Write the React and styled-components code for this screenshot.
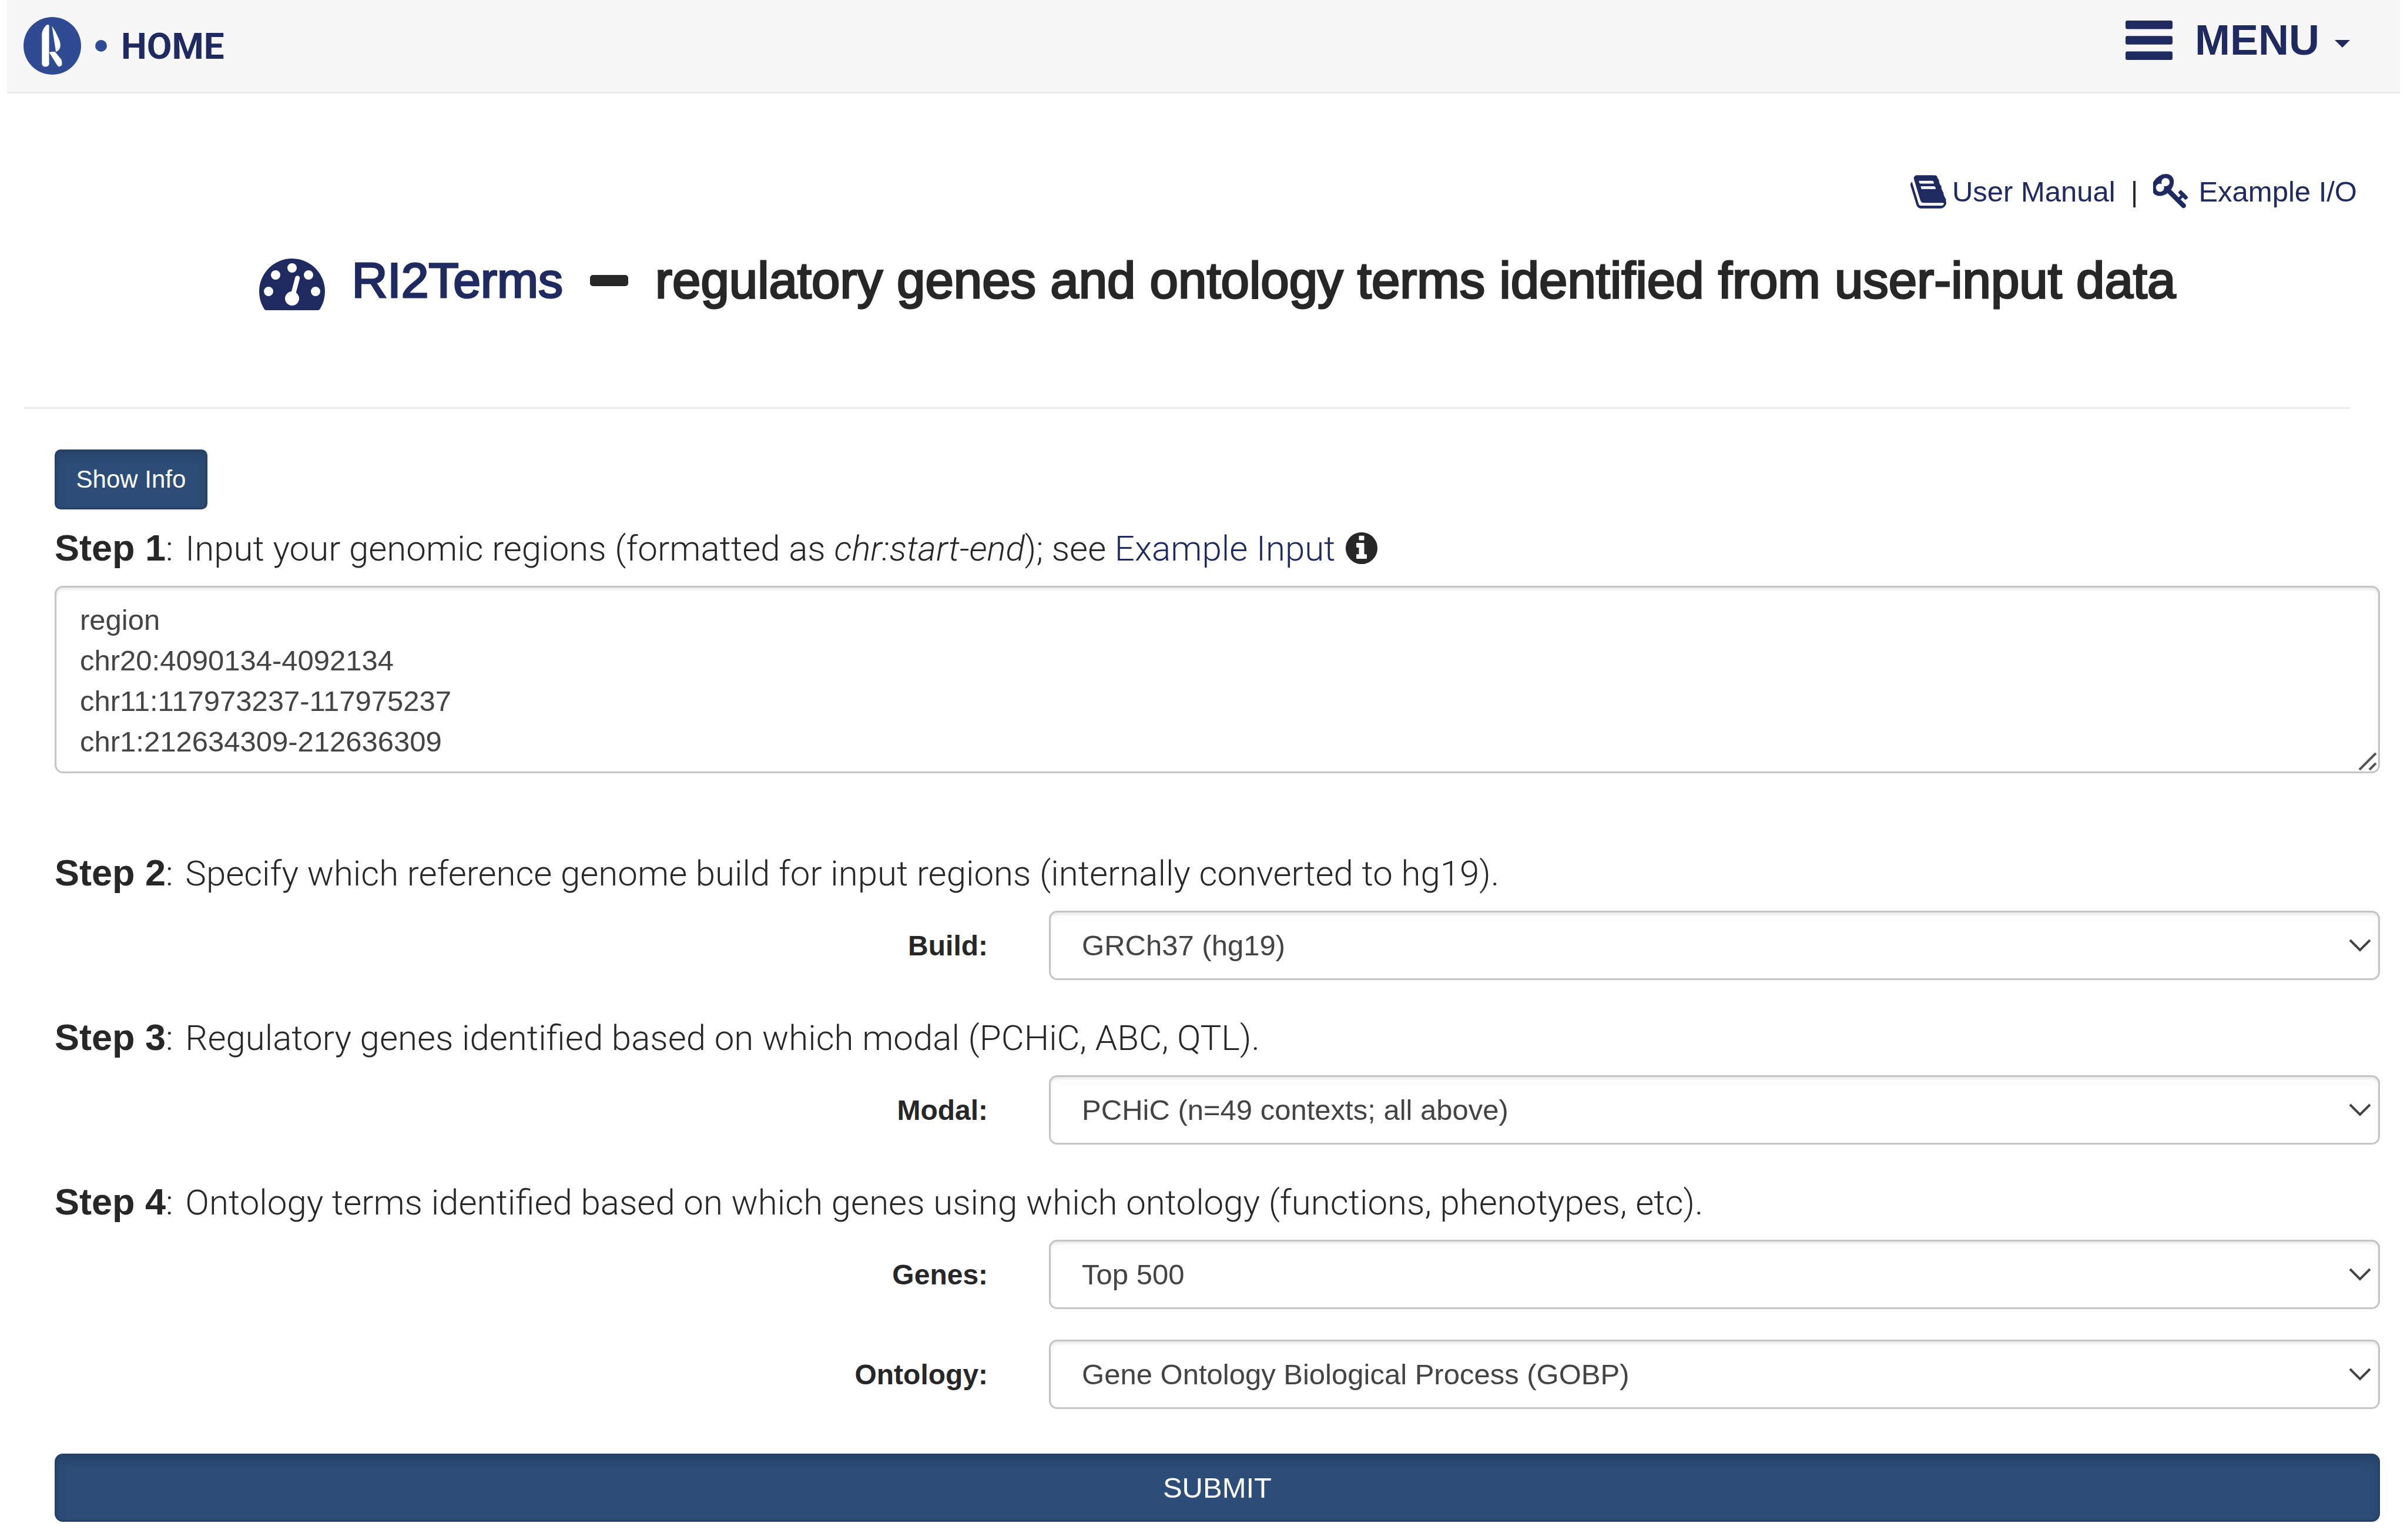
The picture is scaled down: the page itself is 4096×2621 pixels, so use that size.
import React from 'react';
import styled, { createGlobalStyle } from 'styled-components';

const navy = '#1e2a60';
const ink = '#272727';
const sans = '"Liberation Sans", Arial, sans-serif';
const light = 'Roboto, "Liberation Sans", sans-serif';

const GlobalStyle = createGlobalStyle`
  *, *::before, *::after { box-sizing: border-box; }
  body {
    margin: 0;
    background: #fefefe;
    color: ${ink};
    font-family: ${sans};
    font-size: 49px;
    line-height: 69px;
  }
  svg { display: block; flex: none; }
`;

const TopBar = styled.header`
  display: flex;
  align-items: center;
  justify-content: space-between;
  height: 159px;
  margin: 0 12px;
  padding: 0 85px 0 28px;
  background: #f7f7f7;
  border-bottom: 3px solid #ebebeb;
`;

const Brand = styled.a`
  display: flex;
  align-items: center;
  color: ${navy};
  font-family: Roboto, ${sans};
  font-size: 62px;
  font-weight: 700;
  text-decoration: none;
`;

const Dot = styled.span`
  width: 20px;
  height: 20px;
  margin: 0 24px;
  border-radius: 50%;
  background: #2f4b93;
`;

const MenuButton = styled.button`
  display: flex;
  align-items: center;
  gap: 38px;
  padding: 0 0 20px;
  border: 0;
  background: none;
  color: ${navy};
  font: 700 72px/72px ${sans};
`;

const MenuLabel = styled.span`
  display: flex;
  align-items: center;
  gap: 26px;
`;

const Caret = styled.span`
  margin-top: 12px;
  border: 13px solid transparent;
  border-top-color: ${navy};
  border-bottom: 0;
`;

const Banner = styled.section`
  padding: 133px 46px 165px 93px;
`;

const Links = styled.nav`
  display: flex;
  justify-content: flex-end;
  gap: 26px;
  padding-right: 39px;
`;

const IconLink = styled.a`
  display: flex;
  align-items: center;
  gap: ${(p) => p.$gap}px;
  color: ${navy};
  text-decoration: none;
`;

const Title = styled.h1`
  display: flex;
  align-items: center;
  justify-content: center;
  gap: 46px;
  margin: 65px 0 0;
  font-size: 87px;
  font-weight: 400;
  line-height: 92px;
  -webkit-text-stroke: 3px currentColor;
  svg {
    margin-top: 14px;
    -webkit-text-stroke: 0;
  }
`;

const TitleLink = styled.a`
  display: flex;
  align-items: center;
  gap: 46px;
  color: ${navy};
  font-size: 84px;
  text-decoration: none;
`;

const Dash = styled.span`
  width: 65px;
  height: 19px;
  border-radius: 5px;
  background: ${ink};
`;

const Rule = styled.hr`
  height: 3px;
  margin: 0 97px 69px 41px;
  border: 0;
  background: #ebebeb;
`;

const Form = styled.form`
  padding: 0 46px 26px 93px;
`;

const Button = styled.button`
  display: block;
  padding: 0;
  color: #fff;
  background: #2c4d78;
  border: 3px solid #244068;
  box-shadow: inset 0 10px 17px rgba(0, 0, 0, 0.125);
  font-family: ${sans};
`;

const InfoButton = styled(Button)`
  width: 260px;
  height: 102px;
  margin-bottom: 20px;
  border-radius: 10px;
  font-size: 42px;
`;

const SubmitButton = styled(Button)`
  width: 100%;
  height: 116px;
  margin-top: 76px;
  border-radius: 14px;
  font-size: 49px;
`;

const Step = styled.p`
  display: flex;
  align-items: baseline;
  margin: 0 0 18px;
  font-family: ${light};
  font-size: 60px;
  font-weight: 300;
  line-height: 90px;
  white-space: pre;
  a { color: ${navy}; text-decoration: none; }
  svg {
    align-self: center;
    margin-left: 18px;
  }
`;

const StepName = styled.span`
  margin-right: 6px;
  b {
    font-family: ${sans};
    font-size: 63px;
    font-weight: 700;
  }
`;

const AreaBox = styled.div`
  position: relative;
  margin-bottom: 124px;
`;

const Area = styled.textarea`
  display: block;
  width: 100%;
  height: 319px;
  padding: 21px 40px;
  overflow: hidden;
  resize: none;
  color: #444;
  background: #fefefe;
  border: 3px solid #c4c4c4;
  border-radius: 14px;
  box-shadow: inset 0 4px 4px rgba(0, 0, 0, 0.075);
  font: 49px/69px ${sans};
`;

const Grip = styled.svg`
  position: absolute;
  right: 5px;
  bottom: 4px;
`;

const Field = styled.div`
  display: grid;
  grid-template-columns: 5fr 7fr;
  align-items: center;
  margin: 0 -52px 52px;
`;

const FieldLabel = styled.label`
  padding: 0 52px;
  font-size: 48px;
  font-weight: 700;
  text-align: right;
`;

const SelectBox = styled.div`
  position: relative;
  margin: 0 52px;
`;

const Select = styled.select`
  display: block;
  width: 100%;
  height: 118px;
  padding: 0 53px;
  appearance: none;
  color: #444;
  background: #fefefe;
  border: 3px solid #c4c4c4;
  border-radius: 14px;
  box-shadow: inset 0 4px 4px rgba(0, 0, 0, 0.075);
  font: 49px/69px ${sans};
`;

const Chevron = styled.svg`
  position: absolute;
  right: 15px;
  top: 48px;
  pointer-events: none;
`;

const Logo = () => (
  <svg width="98" height="98" viewBox="59 44 144 144" role="img" aria-label="Logo">
    <circle cx="131" cy="116" r="72" fill="#2f4b93" />
    <g fill="#fff">
      <path d="M117 63.500Q119 62.500 123 64V162Q121 168 116 168H111Q107 168 105 162V85Q107 73 117 63.500Z" />
      <path d="M130 66Q140 80 147 98Q152 108 151 117Q150 127 140 131Z" />
      <path d="M123 132Q132 130 138 131L154 151Q156 158 155 164Q152 168 147 168Q143 165 139 158Z" />
    </g>
  </svg>
);

const Bars = () => (
  <svg width="80" height="67" viewBox="0 0 80 67" fill="currentColor">
    <rect width="80" height="14.500" rx="3" />
    <rect y="26.200" width="80" height="14.500" rx="3" />
    <rect y="52.500" width="80" height="14.500" rx="3" />
  </svg>
);

const Book = () => (
  <svg width="61" height="57" viewBox="64 128 1664 1536" fill="currentColor">
    <path
      transform="translate(1792 0) scale(-1 1)"
      d="M1703 478q40 57 18 129l-275 906q-19 64-76.500 107.500t-122.500 43.500h-923q-77 0-148.500-53.500t-99.500-131.500q-24-67-2-127 0-4 3-27t4-37q1-8-3-21.500t-3-19.500q2-11 8-21t16.500-23.500 16.500-23.500q23-38 45-91.500t30-91.500q3-10 .5-30t-.5-28q3-11 17-28t17-23q21-36 42-92t25-90q1-9-2.500-32t.5-28q4-13 22-30.500t22-22.500q19-26 42.500-84.500t27.500-96.500q1-8-3-25.500t-2-26.500q2-8 9-18t18-23 17-21q8-12 16.500-30.500t15-35 16-36 19.500-32 26.500-23.500 36-11.500 47.500 5.500l-1 3q38-9 51-9h761q74 0 114 56t18 130l-274 906q-36 119-71.500 153.500t-128.500 34.500h-869q-27 0-38 15-11 16-1 43 24 70 144 70h923q29 0 56-15.500t35-41.500l300-987q7-22 5-57 38 15 59 43zm-1064 2q-4 13 2 22.500t20 9.500h608q13 0 25.500-9.500t16.500-22.500l21-64q4-13-2-22.500t-20-9.500h-608q-13 0-25.500 9.500t-16.500 22.500zm-83 256q-4 13 2 22.500t20 9.500h608q13 0 25.500-9.500t16.500-22.500l21-64q4-13-2-22.500t-20-9.500h-608q-13 0-25.500 9.500t-16.500 22.500z"
    />
  </svg>
);

const Key = () => (
  <svg width="61" height="61" viewBox="64 128 1664 1664" fill="currentColor">
    <path d="M832 512q0-80-56-136t-136-56-136 56-56 136q0 42 19 83-41-19-83-19-80 0-136 56t-56 136 56 136 136 56 136-56 56-136q0-42-19-83 41 19 83 19 80 0 136-56t56-136zm851 704q0 17-49 66t-66 49q-9 0-28.500-16t-36.500-33-38.500-40-24.500-26l-96 96 220 220q28 28 28 68 0 42-39 81t-81 39q-40 0-68-28l-671-671q-176 131-365 131-163 0-265.500-102.500t-102.500-265.500q0-160 95-313t248-248 313-95q163 0 265.500 102.500t102.500 265.500q0 189-131 365l355 355 96-96q-3-3-26-24.500t-40-38.500-33-36.500-16-28.500q0-17 49-66t66-49q13 0 23 10 6 6 46 44.500t82 79.500 86.500 86 73 78 28.500 41z" />
  </svg>
);

const Gauge = () => (
  <svg width="112" height="88" viewBox="0 256 1792 1408" fill="currentColor">
    <path d="M384 1152q0-53-37.500-90.500t-90.500-37.500-90.500 37.500-37.500 90.500 37.500 90.500 90.500 37.500 90.500-37.500 37.500-90.500zm192-448q0-53-37.500-90.500t-90.500-37.500-90.500 37.500-37.500 90.500 37.500 90.500 90.500 37.500 90.500-37.500 37.500-90.500zm428 481l101-382q6-26-7.500-48.500t-38.500-29.500-48 6.500-30 39.500l-101 382q-60 5-107 43.500t-63 98.500q-20 77 20 146t117 89 146-20 89-117q16-60-6-117t-72-91zm660-33q0-53-37.500-90.500t-90.500-37.500-90.500 37.500-37.500 90.500 37.500 90.500 90.500 37.500 90.500-37.500 37.500-90.500zm-640-640q0-53-37.500-90.500t-90.500-37.500-90.500 37.500-37.500 90.500 37.500 90.500 90.500 37.500 90.500-37.500 37.500-90.500zm448 192q0-53-37.500-90.500t-90.500-37.500-90.500 37.500-37.500 90.500 37.500 90.500 90.500 37.500 90.500-37.500 37.500-90.500zm320 448q0 261-141 483-19 29-54 29h-1402q-35 0-54-29-141-221-141-483 0-182 71-348t191-286 286-191 348-71 348 71 286 191 191 286 71 348z" />
  </svg>
);

const Info = () => (
  <svg width="54" height="54" viewBox="128 128 1536 1536" fill="currentColor">
    <path d="M1152 1376v-160q0-14-9-23t-23-9h-96v-512q0-14-9-23t-23-9h-320q-14 0-23 9t-9 23v160q0 14 9 23t23 9h96v320h-96q-14 0-23 9t-9 23v160q0 14 9 23t23 9h448q14 0 23-9t9-23zm-128-896v-160q0-14-9-23t-23-9h-192q-14 0-23 9t-9 23v160q0 14 9 23t23 9h192q14 0 23-9t9-23zm640 416q0 209-103 385.500t-279.500 279.500-385.500 103-385.500-103-279.500-279.500-103-385.500 103-385.500 279.500-279.500 385.500-103 385.500 103 279.500 279.500 103 385.500z" />
  </svg>
);

function SelectField({ id, label, options }) {
  return (
    <Field>
      <FieldLabel htmlFor={id}>{label}:</FieldLabel>
      <SelectBox>
        <Select id={id}>
          {options.map((o) => (
            <option key={o}>{o}</option>
          ))}
        </Select>
        <Chevron width="38" height="22" viewBox="0 0 38 22" fill="none" stroke="#444" strokeWidth="4">
          <path d="M2 2L19 19L36 2" />
        </Chevron>
      </SelectBox>
    </Field>
  );
}

function StepLine({ number, children, ...rest }) {
  return (
    <Step {...rest}>
      <StepName>
        <b>Step {number}</b>:{' '}
      </StepName>
      {children}
    </Step>
  );
}

const regions = `region
chr20:4090134-4092134
chr11:117973237-117975237
chr1:212634309-212636309`;

export default function App() {
  return (
    <>
      <GlobalStyle />
      <TopBar>
        <Brand href="#home">
          <Logo />
          <Dot />
          HOME
        </Brand>
        <MenuButton type="button">
          <Bars />
          <MenuLabel>
            MENU
            <Caret />
          </MenuLabel>
        </MenuButton>
      </TopBar>
      <main>
        <Banner>
          <Links>
            <IconLink href="#manual" $gap={10}>
              <Book />
              User Manual
            </IconLink>
            <span>|</span>
            <IconLink href="#example" $gap={16}>
              <Key />
              Example I/O
            </IconLink>
          </Links>
          <Title>
            <TitleLink href="#ri2terms">
              <Gauge />
              RI2Terms
            </TitleLink>
            <Dash />
            <span>regulatory genes and ontology terms identified from user-input data</span>
          </Title>
        </Banner>
        <Rule />
        <Form onSubmit={(e) => e.preventDefault()}>
          <InfoButton type="button">Show Info</InfoButton>
          <StepLine number={1} as="label" htmlFor="regions">
            <span>
              Input your genomic regions (formatted as <i>chr:start-end</i>); see{' '}
              <a href="#input">Example Input</a>
            </span>
            <Info />
          </StepLine>
          <AreaBox>
            <Area id="regions" defaultValue={regions} spellCheck={false} />
            <Grip width="32" height="32" viewBox="0 0 32 32" stroke="#555" strokeWidth="4">
              <path d="M2 30L30 2M19 30L30 19" />
            </Grip>
          </AreaBox>
          <StepLine number={2}>
            <span>Specify which reference genome build for input regions (internally converted to hg19).</span>
          </StepLine>
          <SelectField id="build" label="Build" options={['GRCh37 (hg19)']} />
          <StepLine number={3}>
            <span>Regulatory genes identified based on which modal (PCHiC, ABC, QTL).</span>
          </StepLine>
          <SelectField id="modal" label="Modal" options={['PCHiC (n=49 contexts; all above)']} />
          <StepLine number={4}>
            <span>Ontology terms identified based on which genes using which ontology (functions, phenotypes, etc).</span>
          </StepLine>
          <SelectField id="genes" label="Genes" options={['Top 500']} />
          <SelectField id="ontology" label="Ontology" options={['Gene Ontology Biological Process (GOBP)']} />
          <SubmitButton type="submit">SUBMIT</SubmitButton>
        </Form>
      </main>
    </>
  );
}
